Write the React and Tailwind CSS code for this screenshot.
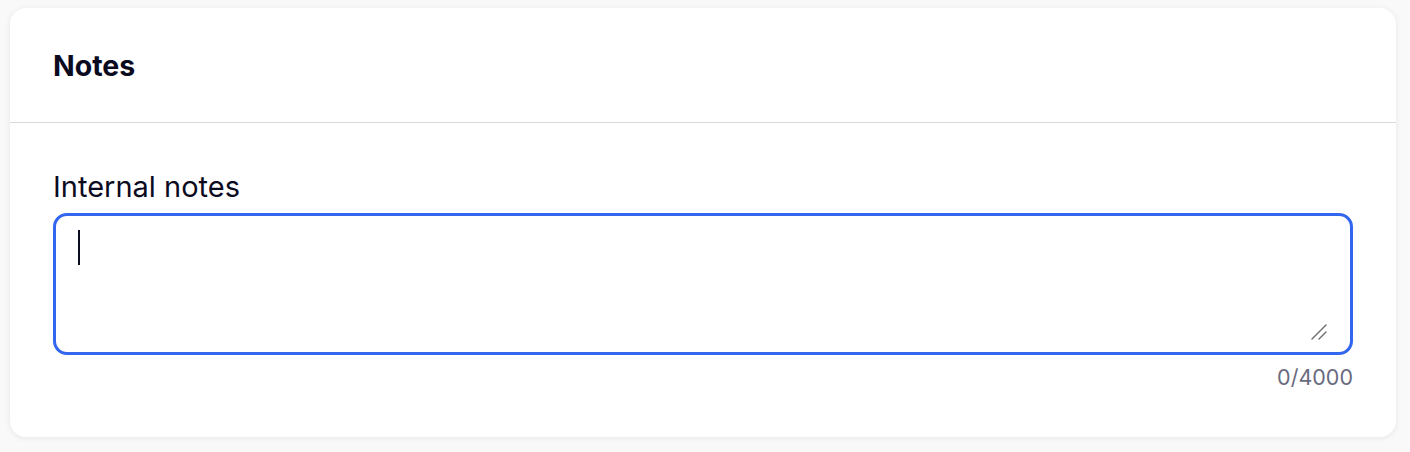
import React, { useState } from 'react';

const App = () => {
  const [notes, setNotes] = useState('');

  return (
    <div className="min-h-screen bg-[#f9f9fa] pt-2 pl-[10px] pr-[14px] pb-4" style={{ fontFamily: 'Inter, "Noto Sans", sans-serif' }}>
      <div className="bg-white rounded-2xl shadow-[0_1px_6px_rgba(0,0,0,0.08)] h-[429px]">
        {/* Header */}
        <div className="h-[115px] px-[43px] flex items-center border-b border-[#d9d9de]">
          <h2 className="text-[28.5px] leading-[34px] font-bold text-[#0b0b1f] pt-[2px]">Notes</h2>
        </div>

        {/* Body */}
        <div className="px-[43px] pt-[48px]">
          <label className="block text-[29px] leading-[32px] text-[#0b0b1f] mb-[10px]">Internal notes</label>
          <div className="relative h-[142px] rounded-[14px] border-[3px] border-[#3366ee]">
            <textarea
              value={notes}
              onChange={e => setNotes(e.target.value.slice(0, 4000))}
              className="block w-full h-full resize-none bg-transparent px-[22px] py-[14px] text-[22px] text-[#0b0b1f] outline-none"
            />
            {notes === '' && <span className="absolute left-[22px] top-[14px] w-[2px] h-[35px] bg-[#0b0b1f]" />}
            <svg className="absolute right-[23px] bottom-[12px] pointer-events-none" width="16" height="16" viewBox="0 0 16 16">
              <path d="M1 15 L15 1 M8 15 L15 8" stroke="#6b6b6b" strokeWidth="1.4" strokeLinecap="round" fill="none" />
            </svg>
          </div>
          <div className="text-right text-[21.5px] leading-[28px] text-[#6b6b80] mt-[8px]">{notes.length}/4000</div>
        </div>
      </div>
    </div>
  );
};

export default App;
